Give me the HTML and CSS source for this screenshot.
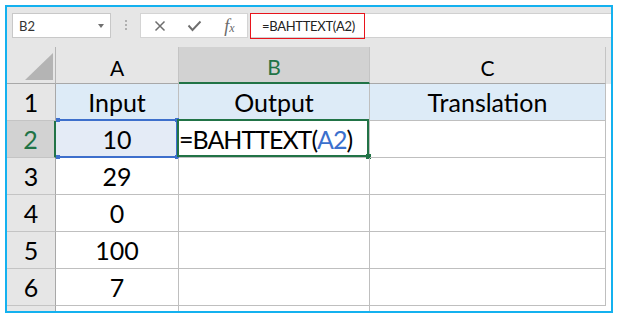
FILE: index.html
```html
<!DOCTYPE html>
<html>
<head>
<meta charset="utf-8">
<link rel="stylesheet" href="styles.css">
</head>
<body>
<div class="frame">
  <div class="toolbar">
    <div class="namebox"><span>B2</span><span class="caret"></span></div>
    <div class="grip"><i></i><i></i><i></i></div>
    <div class="fnbtns">
      <div class="slot"><svg width="12" height="12" viewBox="0 0 12 12"><path d="M1.5 1.5 L10.5 10.5 M10.5 1.5 L1.5 10.5" stroke="#6e6e6e" stroke-width="1.5" fill="none"/></svg></div>
      <div class="slot"><svg width="15" height="12" viewBox="0 0 15 12"><path d="M1.5 5.5 L5.5 10 L13.5 1.5" stroke="#6e6e6e" stroke-width="1.9" fill="none"/></svg></div>
      <div class="slot"><span class="fx">f<small>x</small></span></div>
    </div>
    <div class="formula"><div class="fbox">=BAHTTEXT(A2)</div></div>
  </div>
  <div class="sheet">
    <div class="c corner"><svg width="28" height="27" viewBox="0 0 28 27"><polygon points="28,0 28,27 0,27" fill="#b4b4b4"/></svg></div>
    <div class="c ch">A</div>
    <div class="c ch sel">B</div>
    <div class="c ch">C</div>
    <div class="pad padh"></div>

    <div class="c rh">1</div>
    <div class="c hl">Input</div>
    <div class="c hl">Output</div>
    <div class="c hl">Translation</div>
    <div class="pad"></div>

    <div class="c rh sel">2</div>
    <div class="c a2">10<span class="blue"><i class="k tl"></i><i class="k tr"></i><i class="k bl"></i><i class="k br"></i></span></div>
    <div class="c b2"><span class="ftext">=BAHTTEXT(<span class="ref">A2</span>)</span><span class="green"><i class="handle"></i></span></div>
    <div class="c"></div>
    <div class="pad"></div>

    <div class="c rh">3</div>
    <div class="c">29</div>
    <div class="c"></div>
    <div class="c"></div>
    <div class="pad"></div>

    <div class="c rh">4</div>
    <div class="c">0</div>
    <div class="c"></div>
    <div class="c"></div>
    <div class="pad"></div>

    <div class="c rh">5</div>
    <div class="c">100</div>
    <div class="c"></div>
    <div class="c"></div>
    <div class="pad"></div>

    <div class="c rh">6</div>
    <div class="c">7</div>
    <div class="c"></div>
    <div class="c"></div>
    <div class="pad"></div>

    <div class="c rh last"></div>
    <div class="c last"></div>
    <div class="c last"></div>
    <div class="pad"></div>
    <div class="pad"></div>
  </div>
</div>
</body>
</html>
```

FILE: styles.css
```css
* { box-sizing: border-box; }
body {
  margin: 0;
  background: #fff;
  font-family: Lato, "Liberation Sans", sans-serif;
}
.frame {
  margin: 5px;
  width: 608px;
  height: 308px;
  border: 2px solid #14b1ef;
  display: flex;
  flex-direction: column;
  overflow: hidden;
}
.toolbar {
  height: 40px;
  flex: none;
  background: #e6e6e6;
  display: flex;
  align-items: flex-start;
  padding: 6px 0 0 5px;
}
.namebox {
  width: 99px;
  height: 25px;
  background: #fff;
  border: 1px solid #c8c8c8;
  display: flex;
  align-items: center;
  justify-content: space-between;
  padding: 0 6px 0 6px;
  font-size: 13px;
  color: #333;
}
.caret {
  width: 0;
  height: 0;
  border-left: 3.5px solid transparent;
  border-right: 3.5px solid transparent;
  border-top: 4px solid #707070;
}
.grip {
  width: 29px;
  height: 25px;
  display: flex;
  flex-direction: column;
  align-items: center;
  gap: 2px;
  padding-top: 7px;
}
.grip i {
  display: block;
  width: 2px;
  height: 2px;
  background: #b0b0b0;
}
.fnbtns {
  width: 108px;
  height: 25px;
  background: #fff;
  border: 1px solid #d4d4d4;
  display: flex;
  padding-left: 1px;
}
.slot {
  width: 35px;
  display: flex;
  align-items: center;
  justify-content: center;
}
.fx {
  font-family: "Liberation Serif", serif;
  font-style: italic;
  font-size: 18px;
  color: #6a6a6a;
  line-height: 1;
}
.fx small {
  font-size: 12px;
}
.formula {
  flex: 1;
  margin-left: 2px;
  height: 25px;
  background: #fff;
  border-top: 1px solid #d0d0d0;
  border-bottom: 1px solid #d0d0d0;
}
.fbox {
  display: flex;
  align-items: center;
  height: 26px;
  width: 115px;
  margin-top: -1px;
  border: 1px solid #e8141c;
  padding-left: 11px;
  font-size: 13px;
  letter-spacing: -0.3px;
  color: #222;
}
.sheet {
  flex: 1;
  display: grid;
  grid-template-columns: 49px 123px 191px 236px 1fr;
  grid-template-rows: repeat(7, 37px) 1fr;
}
.c {
  position: relative;
  border-right: 1px solid #bfbfbf;
  border-bottom: 1px solid #bfbfbf;
  display: flex;
  align-items: center;
  justify-content: center;
  font-size: 25px;
  color: #000;
  white-space: nowrap;
}
.corner {
  background: #e6e6e6;
  border-right-color: #b5b5b5;
  border-bottom-color: #a8a8a8;
  align-items: flex-end;
  justify-content: flex-end;
  padding: 0 2px 3px 0;
}
.ch {
  background: #e6e6e6;
  border-right-color: #c4c4c4;
  border-bottom-color: #a8a8a8;
  font-size: 21px;
  padding-top: 4px;
}
.ch.sel {
  background: #d2d2d2;
  color: #217346;
  border-bottom: 2px solid #217346;
}
.rh {
  background: #e6e6e6;
  border-right-color: #a8a8a8;
  border-bottom-color: #c4c4c4;
}
.rh.sel {
  background: #d2d2d2;
  color: #217346;
  border-right: 2px solid #217346;
}
.hl { background: #ddebf7; }
.a2 { background: #e4ebf6; }
.b2 {
  justify-content: flex-start;
  padding-left: 0;
}
.ftext { letter-spacing: -1px; }
.ref { color: #3b70cd; }
.last { border-bottom: none; }
.pad { background: #fff; }
.padh { background: #e6e6e6; }
.blue {
  position: absolute;
  top: -2px;
  left: 0;
  right: 0;
  bottom: -1px;
  border: 2px solid #3d6fcc;
  border-left: none;
}
.k {
  position: absolute;
  width: 4px;
  height: 4px;
  background: #3d6fcc;
}
.k.tl { top: -3px; left: 0; }
.k.tr { top: -3px; right: -3px; }
.k.bl { bottom: -3px; left: 0; }
.k.br { bottom: -3px; right: -3px; }
.green {
  position: absolute;
  top: -2px;
  left: -2px;
  right: 0;
  bottom: 0;
  border: 2px solid #217346;
}
.handle {
  position: absolute;
  right: -4px;
  bottom: -4px;
  width: 5px;
  height: 5px;
  background: #217346;
}
```
